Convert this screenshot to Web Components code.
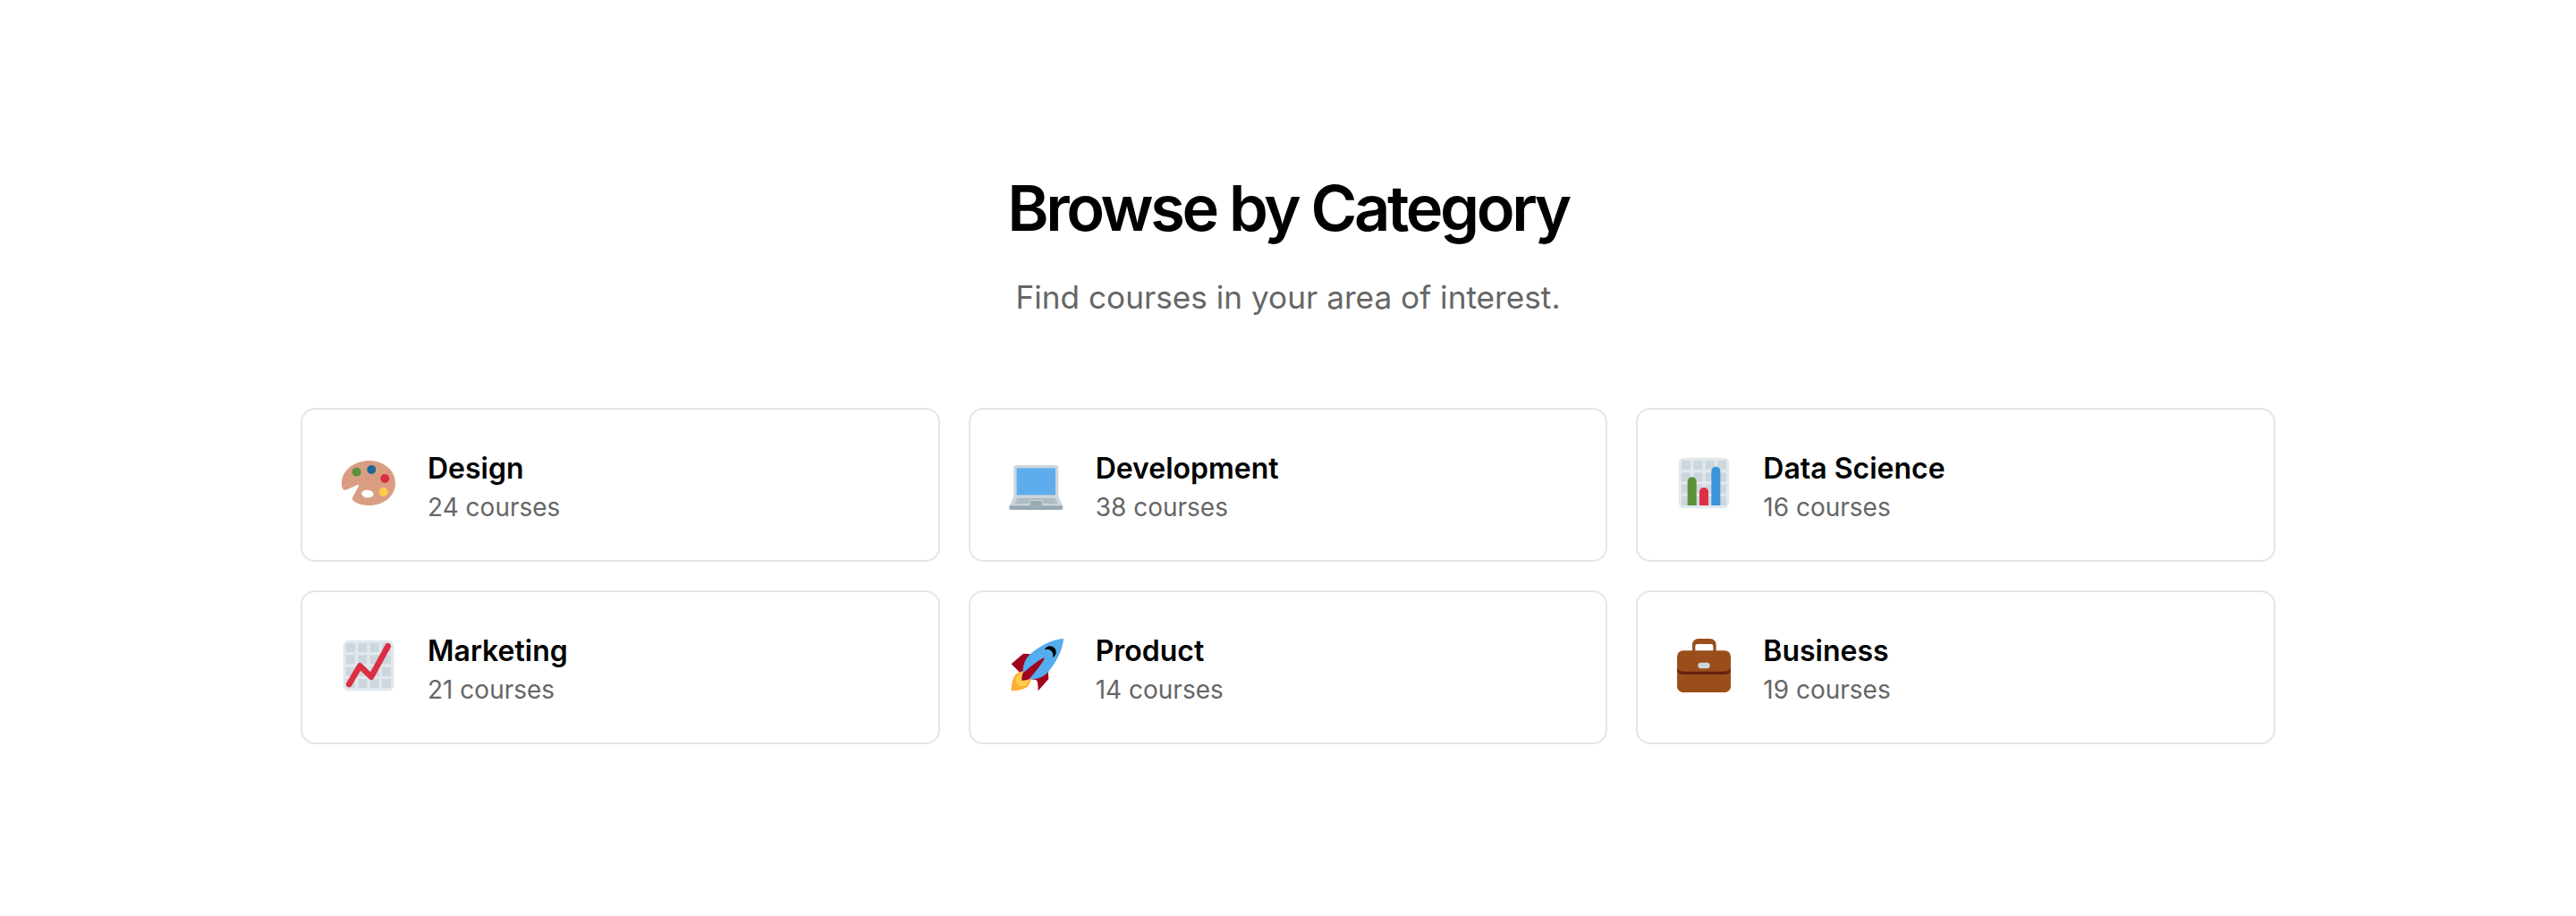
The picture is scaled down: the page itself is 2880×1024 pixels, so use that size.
<!DOCTYPE html>
<html lang="en">
<head>
<meta charset="utf-8">
<title>Browse by Category</title>
<style>
  body { margin: 0; background: #fff; font-family: Inter, "Liberation Sans", sans-serif; }
</style>
</head>
<body>
<category-section heading="Browse by Category" sub="Find courses in your area of interest.">
  <category-card icon="palette" name="Design" count="24 courses"></category-card>
  <category-card icon="laptop" name="Development" count="38 courses"></category-card>
  <category-card icon="bars" name="Data Science" count="16 courses"></category-card>
  <category-card icon="trend" name="Marketing" count="21 courses"></category-card>
  <category-card icon="rocket" name="Product" count="14 courses"></category-card>
  <category-card icon="briefcase" name="Business" count="19 courses"></category-card>
</category-section>

<script>
const grid = [3, 11, 19, 27].map(y => [3, 11, 19, 27].map(x =>
  `<rect x="${x}" y="${y}" width="6" height="6" fill="#CCD6DD"/>`).join('')).join('');
const sheet = `<rect x="1" y="1" width="34" height="34" rx="4" fill="#E1E8ED"/>${grid}`;

const icons = {
  palette: `
    <path fill="#D99E82" fill-rule="evenodd" d="M18.5 3C27.600 3 36 9 36 18c0 9-8 15-17.500 15-4 0-7.500-.900-10.200-2.700-1.200-.800-1.500-2-.800-3.200l3.800-6.800c.400-.800-.300-1.200-1-.900l-6.300 2.800c-1.500.700-2.600.700-3.300-.300C-.200 20.600 0 18.600 0 17 1 8.500 9 3 18.500 3zM17 22.700c-2.400 0-4 1.300-3.500 2.900.500 1.500 2.600 2.400 4.700 2.200 2.400-.200 3.600-1.500 3-3-.600-1.300-2.200-2.100-4.200-2.100z"/>
    <circle cx="10" cy="10.600" r="3" fill="#5C913B"/>
    <circle cx="20" cy="9" r="3" fill="#226699"/>
    <circle cx="29" cy="15" r="3" fill="#DD2E44"/>
    <circle cx="28" cy="24" r="3" fill="#FFCC4D"/>`,
  laptop: `
    <g transform="translate(-.4 0)">
    <rect x="3" y="6" width="30" height="22" rx="2" fill="#CCD6DD"/>
    <rect x="5" y="8" width="26" height="18" fill="#5DADEC"/>
    <path fill="#CCD6DD" d="M3 27h30l3 6.500v1H0v-1z"/>
    <path fill="#AEBBC1" d="M5.500 28h25l2 4H3.500z"/>
    <rect x="13.400" y="29.400" width="9.200" height="4" fill="#CCD6DD"/>
    <rect x="14" y="30" width="8" height="3.200" fill="#99AAB5"/>
    <rect x="0" y="33.200" width="36" height="2.800" rx="1.200" fill="#99AAB5"/>
    </g>`,
  bars: `${sheet}
    <path fill="#5C913B" d="M7 33V17c0-1.700 1.300-3 3-3s3 1.300 3 3v16z"/>
    <path fill="#DD2E44" d="M15 33v-9c0-1.700 1.300-3 3-3s3 1.300 3 3v9z"/>
    <path fill="#3B94D9" d="M23 33V10c0-1.700 1.300-3 3-3s3 1.300 3 3v23z"/>`,
  trend: `${sheet}
    <path fill="none" stroke="#DD2E44" stroke-width="4" stroke-linecap="round" stroke-linejoin="round" d="M5 30.500l7.200-12.300 7.600 7.400L31 5"/>`,
  rocket: `
    <path fill="#A0041E" d="M1 17l8-7 16 1 1 16-7 8s.001-5.999-1-7c-1.001-1.001-7.001-1-7-1z"/>
    <path fill="#FFAC33" d="M.973 35s-.036-7.979 2.985-11S15 21.187 15 21.187 14.999 29 11.999 32c-3 3-11.026 3-11.026 3z"/>
    <circle cx="8.500" cy="27.500" r="4.500" fill="#FFCC4D"/>
    <path fill="#55ACEE" d="M35.999 0s-10 0-22 10c-6 5-6 14-4 16s11 2 16-4c10-12 10-22 10-22z"/>
    <path fill="#000" d="M26.999 5c-1.623 0-3.013.971-3.641 2.360.502-.227 1.055-.360 1.641-.360 2.209 0 4 1.791 4 4 0 .586-.133 1.139-.359 1.640 1.388-.627 2.359-2.017 2.359-3.640 0-2.209-1.791-4-4-4z"/>
    <path fill="#A0041E" d="M8 28s0-4 1-5 13.001-10.999 14-10-9.001 13-10.001 14S8 28 8 28z"/>`,
  briefcase: `
    <path fill="#9A4E1C" fill-rule="evenodd" d="M10.200 9V4c0-2.200 1.800-4 4-4h8c2.200 0 4 1.800 4 4v5h-2V5c0-.800-.600-1.400-1.400-1.400h-9.200c-.800 0-1.400.600-1.400 1.400v4z"/>
    <rect x="0" y="8" width="36" height="28" rx="4" fill="#9A4E1C"/>
    <path fill="#662113" d="M0 18.600c0 2.500 2 3.400 4 3.400h28c2 0 4-.900 4-3.400v2c0 2.500-2 3.400-4 3.400H4c-2 0-4-.900-4-3.400z"/>
    <rect x="14" y="16" width="8" height="4" rx="2" fill="#CCD6DD"/>`
};

class CategorySection extends HTMLElement {
  constructor() {
    super();
    this.attachShadow({ mode: 'open' });
  }
  connectedCallback() {
    this.shadowRoot.innerHTML = `
      <style>
        :host { display: block; padding: 190px 0 0; }
        header { text-align: center; margin-bottom: 102px; }
        h1 {
          margin: 0 0 34px;
          font-size: 70.4px;
          line-height: 86px;
          font-weight: 600;
          letter-spacing: -3.4px;
          color: #000;
        }
        p {
          margin: 0;
          font-size: 35.2px;
          line-height: 44px;
          color: #666;
        }
        .grid {
          display: grid;
          grid-template-columns: repeat(3, 1fr);
          gap: 32px;
          width: 2208px;
          margin: 0 auto;
        }
      </style>
      <header>
        <h1>${this.getAttribute('heading')}</h1>
        <p>${this.getAttribute('sub')}</p>
      </header>
      <div class="grid"><slot></slot></div>`;
  }
}

class CategoryCard extends HTMLElement {
  constructor() {
    super();
    this.attachShadow({ mode: 'open' });
  }
  connectedCallback() {
    this.shadowRoot.innerHTML = `
      <style>
        :host {
          display: flex;
          align-items: center;
          gap: 36px;
          height: 172px;
          box-sizing: border-box;
          padding: 0 44px;
          border: 2px solid #e5e5e5;
          border-radius: 16px;
          background: #fff;
        }
        svg { width: 60px; height: 60px; flex: none; overflow: visible; }
        .text { padding-top: 8px; }
        .name { font-size: 32px; line-height: 42px; font-weight: 600; color: #000; }
        .count { font-size: 28px; line-height: 44px; color: #666; }
      </style>
      <svg viewBox="0 1.2 36 36" aria-hidden="true">${icons[this.getAttribute('icon')]}</svg>
      <div class="text">
        <div class="name">${this.getAttribute('name')}</div>
        <div class="count">${this.getAttribute('count')}</div>
      </div>`;
  }
}

customElements.define('category-section', CategorySection);
customElements.define('category-card', CategoryCard);
</script>
</body>
</html>
